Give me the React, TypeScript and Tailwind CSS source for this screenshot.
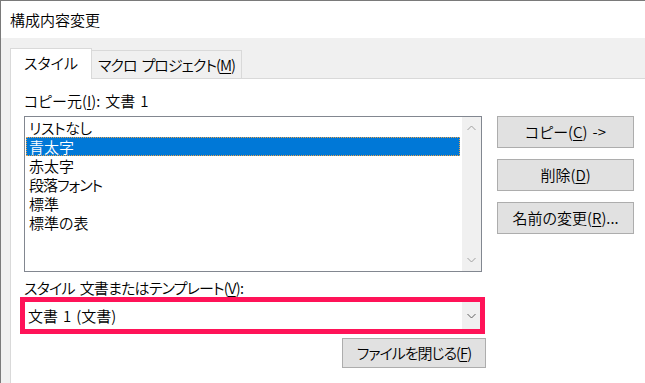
import React from "react";

const U = ({ c }: { c: string }) => <span className="underline underline-offset-2 decoration-1">{c}</span>;
const Sp = ({ w = "w-[5px]" }: { w?: string }) => <span className={"inline-block " + w} />;

const Chevron = ({ up, color = "#a0a0a0" }: { up?: boolean; color?: string }) => (
  <svg width="9" height="6" viewBox="0 0 9 6">
    <path d={up ? "M0.5 5 L4.5 1 L8.5 5" : "M0.5 1 L4.5 5 L8.5 1"} fill="none" stroke={color} strokeWidth="1" />
  </svg>
);

const Btn = ({ children, className = "" }: { children: React.ReactNode; className?: string }) => (
  <div className={"flex items-center justify-center whitespace-nowrap bg-[#e1e1e1] border border-[#adadad] text-[15px] leading-[18px] " + className}>
    {children}
  </div>
);

export default function App() {
  const items = [
    { t: "リストなし", k: "tracking-[-0.4px]" },
    { t: "青太字", k: "" },
    { t: "赤太字", k: "" },
    { t: "段落フォント", k: "tracking-[-1px]" },
    { t: "標準", k: "" },
    { t: "標準の表", k: "" },
  ];
  return (
    <div
      className="w-[645px] h-[383px] overflow-hidden bg-[#f0f0f0] border-l border-t border-[#7a7a7a] text-black flex flex-col whitespace-nowrap font-[350] [font-feature-settings:'palt']"
      style={{ fontFamily: '"Noto Sans CJK JP", "Noto Sans", sans-serif' }}
    >
      <div className="h-[37px] bg-white flex items-center pl-[9px] text-[15px] leading-[18px]">構成内容変更</div>
      <div className="h-[40px] bg-[#f0f0f0] flex items-end pl-[9px] shrink-0">
        <div className="relative z-10 -mb-px w-[82px] h-[31px] bg-white border border-b-0 border-[#d9d9d9] flex items-center justify-center text-[15px] leading-[18px] pb-[2px]">
          スタイル
        </div>
        <div className="w-[150px] h-[28px] bg-[#f0f0f0] border border-b-0 border-l-0 border-[#d9d9d9] flex items-center justify-center text-[15px] leading-[18px] tracking-[-1px]">
          マクロ<Sp />プロジェクト(<U c="M" />)
        </div>
      </div>
      <div className="flex-1 ml-[9px] bg-white border-l border-t border-[#d9d9d9] pl-[9px] pt-[13px]">
        <div className="flex">
          <div className="w-[466px]">
            <div className="ml-[4px] text-[15px] leading-[18px] h-[18px]">
              コピー元(<U c="I" />):<Sp />文書<Sp />1
            </div>
            <div className="ml-[4px] mt-[6px] w-[458px] h-[156px] border border-[#828790] bg-white flex">
              <div className="flex-1 pt-[1px] pl-[1px] pr-[2px]">
                {items.map((it, i) => (
                  <div
                    key={it.t}
                    className={
                      "h-[19px] pl-[3px] text-[15px] leading-[19px] " +
                      it.k +
                      (i === 1 ? " bg-[#0078d7] text-white outline outline-1 outline-dotted outline-[#e9a24a] -outline-offset-1" : "")
                    }
                  >
                    {it.t}
                  </div>
                ))}
              </div>
              <div className="w-[19px] bg-[#f0f0f0] flex flex-col items-center justify-between py-[8px]">
                <Chevron up />
                <Chevron />
              </div>
            </div>
            <div className="ml-[4px] mt-[7px] text-[15px] leading-[17px] h-[17px] tracking-[-0.8px]">
              スタイル<Sp />文書またはテンプレート(<U c="V" />):
            </div>
            <div className="mt-[1px] w-[465px] h-[37px] border-[5px] border-[#ff1358] bg-white flex">
              <div className="flex-1 flex items-center pl-[3px] text-[15px] leading-[18px]">
                文書<Sp />1<Sp />(文書)
              </div>
              <div className="w-[18px] bg-[#f0f0f0] flex items-center justify-center">
                <Chevron color="#606060" />
              </div>
            </div>
            <div className="flex justify-end mt-[4px]">
              <Btn className="w-[144px] h-[30px] tracking-[-1px]">
                ファイルを閉じる(<U c="F" />)
              </Btn>
            </div>
          </div>
          <div className="ml-[11px] pt-[24px] flex flex-col gap-[11px]">
            <Btn className="w-[137px] h-[32px]">
              コピー(<U c="C" />)<Sp />-&gt;
            </Btn>
            <Btn className="w-[137px] h-[32px]">
              削除(<U c="D" />)
            </Btn>
            <Btn className="w-[137px] h-[32px]">
              名前の変更(<U c="R" />)...
            </Btn>
          </div>
        </div>
      </div>
    </div>
  );
}
